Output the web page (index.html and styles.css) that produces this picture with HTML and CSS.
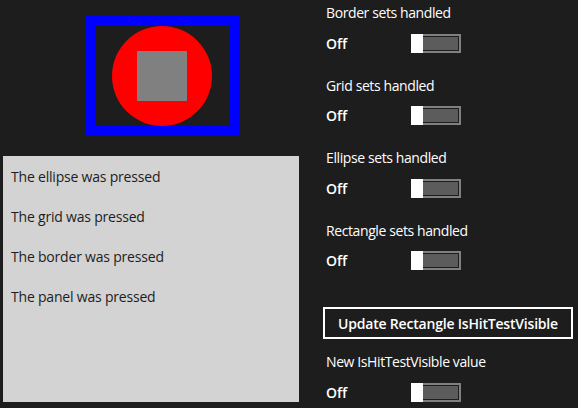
FILE: index.html
```
<!DOCTYPE html>
<html>
<head>
<meta charset="utf-8">
<link rel="stylesheet" href="styles.css">
</head>
<body>
<div class="page">
  <div class="left">
    <div class="frame">
      <div class="ellipse"><div class="square"></div></div>
    </div>
    <div class="panel">
      <p>The ellipse was pressed</p>
      <p>The grid was pressed</p>
      <p>The border was pressed</p>
      <p>The panel was pressed</p>
    </div>
  </div>
  <div class="right">
    <div class="group">
      <div class="label">Border sets handled</div>
      <div class="row"><span class="state">Off</span><div class="toggle"><div class="fill"></div><div class="thumb"></div></div></div>
    </div>
    <div class="group">
      <div class="label">Grid sets handled</div>
      <div class="row"><span class="state">Off</span><div class="toggle"><div class="fill"></div><div class="thumb"></div></div></div>
    </div>
    <div class="group">
      <div class="label">Ellipse sets handled</div>
      <div class="row"><span class="state">Off</span><div class="toggle"><div class="fill"></div><div class="thumb"></div></div></div>
    </div>
    <div class="group">
      <div class="label">Rectangle sets handled</div>
      <div class="row"><span class="state">Off</span><div class="toggle"><div class="fill"></div><div class="thumb"></div></div></div>
    </div>
    <button class="btn">Update Rectangle IsHitTestVisible</button>
    <div class="group last">
      <div class="label">New IsHitTestVisible value</div>
      <div class="row"><span class="state">Off</span><div class="toggle"><div class="fill"></div><div class="thumb"></div></div></div>
    </div>
  </div>
</div>
</body>
</html>
```

FILE: styles.css
```
html, body {
  margin: 0;
  padding: 0;
  background: #1d1d1d;
}
body {
  font-family: "Open Sans", "Noto Sans", sans-serif;
  width: 578px;
  height: 408px;
  overflow: hidden;
}
.page {
  display: flex;
  align-items: flex-start;
}
.left {
  width: 299px;
  display: flex;
  flex-direction: column;
}
.frame {
  box-sizing: border-box;
  width: 154px;
  height: 120px;
  margin: 16px 0 0 85px;
  border: 10px solid #0000ff;
  display: flex;
  justify-content: center;
}
.ellipse {
  width: 100px;
  height: 100px;
  border-radius: 50%;
  background: #ff0000;
  display: flex;
  align-items: center;
  justify-content: center;
}
.square {
  width: 50px;
  height: 50px;
  background: #808080;
}
.panel {
  box-sizing: border-box;
  margin: 20px 0 0 3px;
  width: 296px;
  height: 246px;
  background: #d3d3d3;
  padding: 11px 0 0 8px;
  display: flex;
  flex-direction: column;
  gap: 20px;
}
.panel p {
  margin: 0;
  font-size: 14px;
  line-height: 20px;
  letter-spacing: -0.2px;
  color: #1d1d1d;
}
.right {
  margin-left: 27px;
  padding-top: 3px;
  display: flex;
  flex-direction: column;
}
.group {
  display: flex;
  flex-direction: column;
  gap: 10px;
  margin-bottom: 22.6px;
}
.label {
  font-size: 14px;
  line-height: 20px;
  letter-spacing: -0.4px;
  color: #ffffff;
}
.row {
  display: flex;
  align-items: center;
  height: 20px;
}
.state {
  width: 85px;
  font-size: 14px;
  font-weight: 600;
  color: #ffffff;
}
.toggle {
  position: relative;
  box-sizing: border-box;
  width: 50px;
  height: 19px;
  border: 2px solid #808080;
  padding: 1px;
}
.fill {
  width: 100%;
  height: 100%;
  background: #5c5c5c;
}
.thumb {
  position: absolute;
  left: -2px;
  top: -2px;
  width: 12px;
  height: 19px;
  background: #ffffff;
}
.btn {
  box-sizing: border-box;
  width: 250px;
  height: 32px;
  margin: 14px 0 13px -3px;
  background: transparent;
  border: 2px solid #ffffff;
  color: #ffffff;
  font-family: "Open Sans", "Noto Sans", sans-serif;
  font-size: 14px;
  font-weight: 600;
  letter-spacing: -0.2px;
  padding: 0;
}
.group.last {
  margin-bottom: 0;
}
```
